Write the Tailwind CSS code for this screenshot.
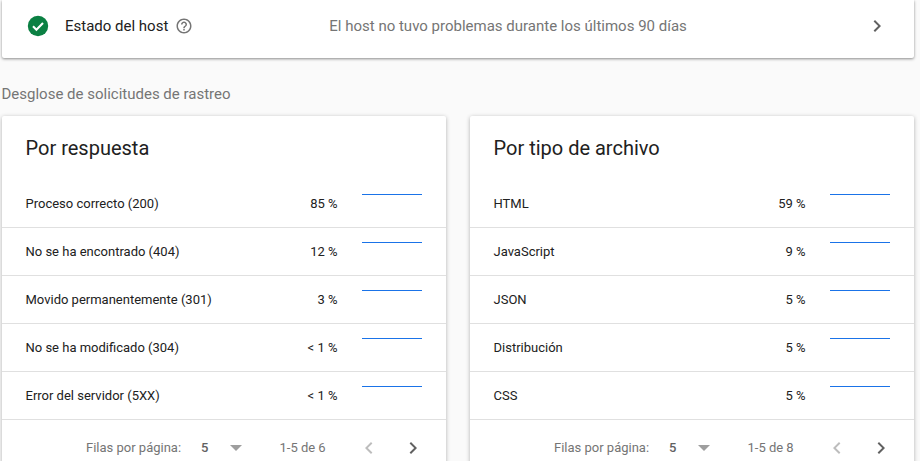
<!DOCTYPE html>
<html lang="es">
<head>
  <meta charset="UTF-8">
  <script src="https://cdn.jsdelivr.net/npm/@tailwindcss/browser@4"></script>
  <title>Estadísticas de rastreo</title>
</head>
<body class="bg-[#fafafa] font-['Roboto',sans-serif] h-[461px] overflow-hidden">
  <div class="pl-[2px] pr-[6px]">
    <!-- host -->
    <div class="flex items-center h-[58px] pb-[6px] pl-[25px] pr-[25px] bg-white rounded-b-[2px] shadow-[0_1px_3px_rgba(0,0,0,0.45)]">
      <svg class="w-[22px] h-[22px]" viewBox="0 0 22 22"><circle cx="11" cy="11" r="10.2" fill="#0b8043"/><path d="M6 11.3l3.4 3.4 6.6-6.8" fill="none" stroke="#fff" stroke-width="2.1"/></svg>
      <span class="ml-[16px] text-[15px] text-[#212121]">Estado del host</span>
      <svg class="ml-[7px] w-[18px] h-[18px]" viewBox="0 0 24 24" fill="#757575"><path d="M11 18h2v-2h-2v2zm1-16C6.48 2 2 6.48 2 12s4.48 10 10 10 10-4.48 10-10S17.52 2 12 2zm0 18c-4.41 0-8-3.59-8-8s3.59-8 8-8 8 3.59 8 8-3.59 8-8 8zm0-14c-2.21 0-4 1.79-4 4h2c0-1.1.9-2 2-2s2 .9 2 2c0 2-3 1.75-3 5h2c0-2.25 3-2.5 3-5 0-2.21-1.79-4-4-4z"/></svg>
      <span class="ml-[136px] text-[15px] text-[#757575]">El host no tuvo problemas durante los últimos 90 días</span>
      <svg class="ml-auto w-[24px] h-[24px]" viewBox="0 0 24 24" fill="#616161"><path d="M10 6L8.6 7.4 13.2 12l-4.6 4.6L10 18l6-6z"/></svg>
    </div>

    <h2 class="mt-[27px] -ml-[0.5px] text-[15px] leading-[18px] text-[#757575]">Desglose de solicitudes de rastreo</h2>

    <div class="grid grid-cols-2 gap-6 mt-[13px]">
      <!-- por respuesta -->
      <div class="bg-white rounded-[2px] shadow-[0_1px_4px_rgba(0,0,0,0.3)]">
        <h3 class="pl-[23.5px] pt-[19px] pb-[19px] h-[64px] text-[20px] leading-[26px] text-[#212121]">Por respuesta</h3>
        <div class="text-[13px] text-[#212121]">
          <div class="flex h-[48px] pl-[23.5px] pr-[24px] border-b border-[#e0e0e0]">
            <span class="self-center">Proceso correcto (200)</span>
            <span class="self-center ml-auto">85 %</span>
            <span class="ml-[24.5px] mt-[14px] w-[60px] h-px bg-[#1a73e8]"></span>
          </div>
          <div class="flex h-[48px] pl-[23.5px] pr-[24px] border-b border-[#e0e0e0]">
            <span class="self-center">No se ha encontrado (404)</span>
            <span class="self-center ml-auto">12 %</span>
            <span class="ml-[24.5px] mt-[14px] w-[60px] h-px bg-[#1a73e8]"></span>
          </div>
          <div class="flex h-[48px] pl-[23.5px] pr-[24px] border-b border-[#e0e0e0]">
            <span class="self-center">Movido permanentemente (301)</span>
            <span class="self-center ml-auto">3 %</span>
            <span class="ml-[24.5px] mt-[14px] w-[60px] h-px bg-[#1a73e8]"></span>
          </div>
          <div class="flex h-[48px] pl-[23.5px] pr-[24px] border-b border-[#e0e0e0]">
            <span class="self-center">No se ha modificado (304)</span>
            <span class="self-center ml-auto">&lt; 1 %</span>
            <span class="ml-[24.5px] mt-[14px] w-[60px] h-px bg-[#1a73e8]"></span>
          </div>
          <div class="flex h-[48px] pl-[23.5px] pr-[24px] border-b border-[#e0e0e0]">
            <span class="self-center">Error del servidor (5XX)</span>
            <span class="self-center ml-auto">&lt; 1 %</span>
            <span class="ml-[24.5px] mt-[14px] w-[60px] h-px bg-[#1a73e8]"></span>
          </div>
        </div>
        <div class="flex items-center h-[56px] pl-[84px] text-[13px] text-[#757575]">
          <span>Filas por página:</span>
          <span class="ml-[20px] font-medium text-[#616161]">5</span>
          <svg class="ml-[22px] w-[12px] h-[6px]" viewBox="0 0 12 6" fill="#9e9e9e"><path d="M0 0h12L6 6z"/></svg>
          <span class="ml-[37px]">1-5 de 6</span>
          <svg class="ml-[31px] w-[24px] h-[24px]" viewBox="0 0 24 24" fill="#bdbdbd"><path d="M15.4 7.4L14 6l-6 6 6 6 1.4-1.4-4.6-4.6z"/></svg>
          <svg class="ml-[20px] w-[24px] h-[24px]" viewBox="0 0 24 24" fill="#616161"><path d="M10 6L8.6 7.4 13.2 12l-4.6 4.6L10 18l6-6z"/></svg>
        </div>
      </div>

      <!-- por tipo de archivo -->
      <div class="bg-white rounded-[2px] shadow-[0_1px_4px_rgba(0,0,0,0.3)]">
        <h3 class="pl-[23.5px] pt-[19px] pb-[19px] h-[64px] text-[20px] leading-[26px] text-[#212121]">Por tipo de archivo</h3>
        <div class="text-[13px] text-[#212121]">
          <div class="flex h-[48px] pl-[23.5px] pr-[24px] border-b border-[#e0e0e0]">
            <span class="self-center">HTML</span>
            <span class="self-center ml-auto">59 %</span>
            <span class="ml-[24.5px] mt-[14px] w-[60px] h-px bg-[#1a73e8]"></span>
          </div>
          <div class="flex h-[48px] pl-[23.5px] pr-[24px] border-b border-[#e0e0e0]">
            <span class="self-center">JavaScript</span>
            <span class="self-center ml-auto">9 %</span>
            <span class="ml-[24.5px] mt-[14px] w-[60px] h-px bg-[#1a73e8]"></span>
          </div>
          <div class="flex h-[48px] pl-[23.5px] pr-[24px] border-b border-[#e0e0e0]">
            <span class="self-center">JSON</span>
            <span class="self-center ml-auto">5 %</span>
            <span class="ml-[24.5px] mt-[14px] w-[60px] h-px bg-[#1a73e8]"></span>
          </div>
          <div class="flex h-[48px] pl-[23.5px] pr-[24px] border-b border-[#e0e0e0]">
            <span class="self-center">Distribución</span>
            <span class="self-center ml-auto">5 %</span>
            <span class="ml-[24.5px] mt-[14px] w-[60px] h-px bg-[#1a73e8]"></span>
          </div>
          <div class="flex h-[48px] pl-[23.5px] pr-[24px] border-b border-[#e0e0e0]">
            <span class="self-center">CSS</span>
            <span class="self-center ml-auto">5 %</span>
            <span class="ml-[24.5px] mt-[14px] w-[60px] h-px bg-[#1a73e8]"></span>
          </div>
        </div>
        <div class="flex items-center h-[56px] pl-[84px] text-[13px] text-[#757575]">
          <span>Filas por página:</span>
          <span class="ml-[20px] font-medium text-[#616161]">5</span>
          <svg class="ml-[22px] w-[12px] h-[6px]" viewBox="0 0 12 6" fill="#9e9e9e"><path d="M0 0h12L6 6z"/></svg>
          <span class="ml-[37px]">1-5 de 8</span>
          <svg class="ml-[31px] w-[24px] h-[24px]" viewBox="0 0 24 24" fill="#bdbdbd"><path d="M15.4 7.4L14 6l-6 6 6 6 1.4-1.4-4.6-4.6z"/></svg>
          <svg class="ml-[20px] w-[24px] h-[24px]" viewBox="0 0 24 24" fill="#616161"><path d="M10 6L8.6 7.4 13.2 12l-4.6 4.6L10 18l6-6z"/></svg>
        </div>
      </div>
    </div>
  </div>
</body>
</html>
